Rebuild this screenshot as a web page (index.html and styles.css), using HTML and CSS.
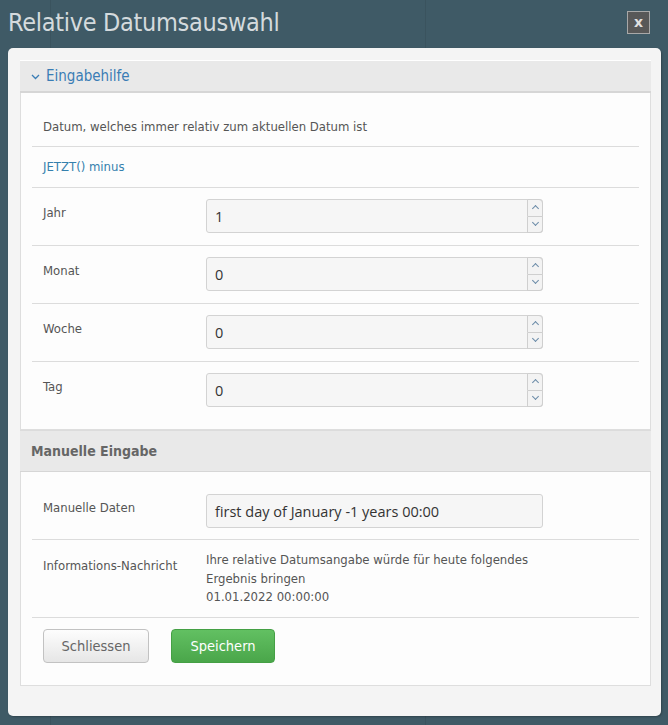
FILE: index.html
```html
<!DOCTYPE html>
<html lang="de">
<head>
<meta charset="utf-8">
<title>Relative Datumsauswahl</title>
<link rel="stylesheet" href="styles.css">
</head>
<body>
<div class="titlebar">
  <h1 class="title">Relative Datumsauswahl</h1>
  <button class="close">x</button>
</div>
<div class="dialog">
  <div class="section-head blue">
    <svg class="chev" width="9" height="6" viewBox="0 0 9 6"><path d="M1 1 L4.5 4.5 L8 1" fill="none" stroke="#3a7db5" stroke-width="1.3"/></svg>
    <span>Eingabehilfe</span>
  </div>
  <div class="panel">
    <div class="row intro">Datum, welches immer relativ zum aktuellen Datum ist</div>
    <div class="row link-row"><span class="link">JETZT() minus</span></div>
    <div class="row field">
      <div class="label">Jahr</div>
      <div class="input num"><span class="val">1</span><div class="spin"><span class="up"></span><span class="down"></span></div></div>
    </div>
    <div class="row field">
      <div class="label">Monat</div>
      <div class="input num"><span class="val">0</span><div class="spin"><span class="up"></span><span class="down"></span></div></div>
    </div>
    <div class="row field">
      <div class="label">Woche</div>
      <div class="input num"><span class="val">0</span><div class="spin"><span class="up"></span><span class="down"></span></div></div>
    </div>
    <div class="row field last">
      <div class="label">Tag</div>
      <div class="input num"><span class="val">0</span><div class="spin"><span class="up"></span><span class="down"></span></div></div>
    </div>
  </div>
  <div class="section-head grey"><span>Manuelle Eingabe</span></div>
  <div class="panel">
    <div class="row field manual">
      <div class="label">Manuelle Daten</div>
      <div class="input"><span class="val">first day of January -1 years 00:00</span></div>
    </div>
    <div class="row info">
      <div class="label">Informations-Nachricht</div>
      <div class="info-text">Ihre relative Datumsangabe würde für heute folgendes<br>Ergebnis bringen<br>01.01.2022 00:00:00</div>
    </div>
    <div class="row buttons">
      <button class="btn btn-default">Schliessen</button>
      <button class="btn btn-save">Speichern</button>
    </div>
  </div>
</div>
</body>
</html>
```
FILE: styles.css
```css
html, body {
  margin: 0;
  padding: 0;
}
body {
  width: 668px;
  height: 725px;
  background-color: #3f5a66;
  background-image:
    linear-gradient(to right, transparent 50px, rgba(0,0,0,0.08) 50px, rgba(0,0,0,0.08) 51px, transparent 51px),
    linear-gradient(to right, transparent 425px, rgba(0,0,0,0.08) 425px, rgba(0,0,0,0.08) 426px, transparent 426px);
  font-family: "DejaVu Sans Condensed", "DejaVu Sans", sans-serif;
  overflow: hidden;
}
.titlebar {
  height: 48px;
  display: flex;
  align-items: flex-start;
  justify-content: space-between;
  padding: 0 18px 0 8px;
  box-sizing: border-box;
}
.title {
  margin: 8px 0 0 0;
  font-size: 25px;
  font-weight: normal;
  color: #d4dadd;
  line-height: 30px;
  letter-spacing: -0.3px;
}
.close {
  margin-top: 11px;
  width: 23px;
  height: 23px;
  padding: 0;
  background: #585858;
  border: 1px solid #a8a8a8;
  color: #e0e0e0;
  font-family: "DejaVu Sans", sans-serif;
  font-weight: bold;
  font-size: 14px;
  line-height: 19px;
  text-align: center;
}
.dialog {
  margin: 0 7px 0 8px;
  background: #f4f4f4;
  border-radius: 5px;
  padding: 12px 10px 30px 12px;
  box-shadow: 1px 1px 2px rgba(0,0,0,0.25);
}
.section-head {
  display: flex;
  align-items: center;
  background: #e9e9e9;
  border-top: 1px solid #fff;
  border-bottom: 1px solid #d6d6d6;
  box-sizing: border-box;
  padding-left: 11px;
}
.section-head.blue {
  height: 33px;
  color: #3a7db5;
  font-size: 15px;
  border-bottom: 2px solid #d6d6d6;
}
.section-head .chev {
  margin-right: 6px;
  margin-top: 2px;
}
.section-head.grey {
  height: 42px;
  border-top: 1px solid #dcdcdc;
  color: #666;
  font-weight: bold;
  font-size: 14px;
}
.panel {
  background: #fdfdfd;
  border: 1px solid #dedede;
  border-top: none;
  padding: 0 11px;
}
.row {
  border-bottom: 1px solid #dcdcdc;
  font-size: 13px;
  color: #555;
  line-height: 16px;
}
.row.intro {
  padding: 26px 0 11px 11px;
}
.row.link-row {
  height: 41px;
  display: flex;
  align-items: center;
  padding-left: 11px;
  box-sizing: border-box;
}
.link {
  color: #3580ad;
}
.row.field {
  display: flex;
  align-items: flex-start;
  padding: 11px 0 12px;
}
.row.field.last {
  border-bottom: none;
  padding-bottom: 22px;
}
.label {
  width: 163px;
  padding-left: 11px;
  padding-top: 6px;
  flex: none;
}
.input {
  width: 337px;
  height: 34px;
  box-sizing: border-box;
  background: #f6f6f6;
  border: 1px solid #d3d3d3;
  border-radius: 3px;
  display: flex;
  align-items: center;
  font-family: "Open Sans", sans-serif;
  font-size: 14.5px;
  color: #333;
  position: relative;
}
.input .val {
  padding-left: 8px;
  flex: 1;
  padding-top: 2px;
}
.spin {
  width: 16px;
  height: 34px;
  margin: -1px -1px -1px 0;
  display: flex;
  flex-direction: column;
  align-self: stretch;
}
.spin span {
  flex: 1;
  background: #f3f3f3;
  border: 1px solid #cfcfcf;
  box-sizing: border-box;
  position: relative;
}
.spin .up {
  border-top-right-radius: 4px;
}
.spin .down {
  border-top: none;
  border-bottom-right-radius: 4px;
}
.spin span::after {
  content: "";
  position: absolute;
  left: 5px;
  width: 4px;
  height: 4px;
  border-left: 1px solid #6b8ba8;
  border-top: 1px solid #6b8ba8;
}
.spin .up::after {
  top: 6px;
  transform: rotate(45deg);
}
.spin .down::after {
  top: 3px;
  transform: rotate(225deg);
}
.row.manual {
  padding: 22px 0 11px;
}
.row.info {
  display: flex;
  padding: 11px 0 10px;
}
.row.info .label {
  padding-top: 8px;
  line-height: 14px;
}
.info-text {
  line-height: 18.5px;
}
.row.buttons {
  border-bottom: none;
  display: flex;
  gap: 22px;
  padding: 11px 0 22px 11px;
}
.btn {
  height: 34px;
  border-radius: 4px;
  font-family: "DejaVu Sans Condensed", "DejaVu Sans", sans-serif;
  font-size: 14.5px;
  padding: 0;
}
.btn-default {
  width: 106px;
  background: linear-gradient(#fdfdfd, #e6e6e6);
  border: 1px solid #c2c2c2;
  color: #666;
}
.btn-save {
  width: 104px;
  background: linear-gradient(#62c062, #4aa64a);
  border: 1px solid #45a045;
  color: #fff;
}
```
